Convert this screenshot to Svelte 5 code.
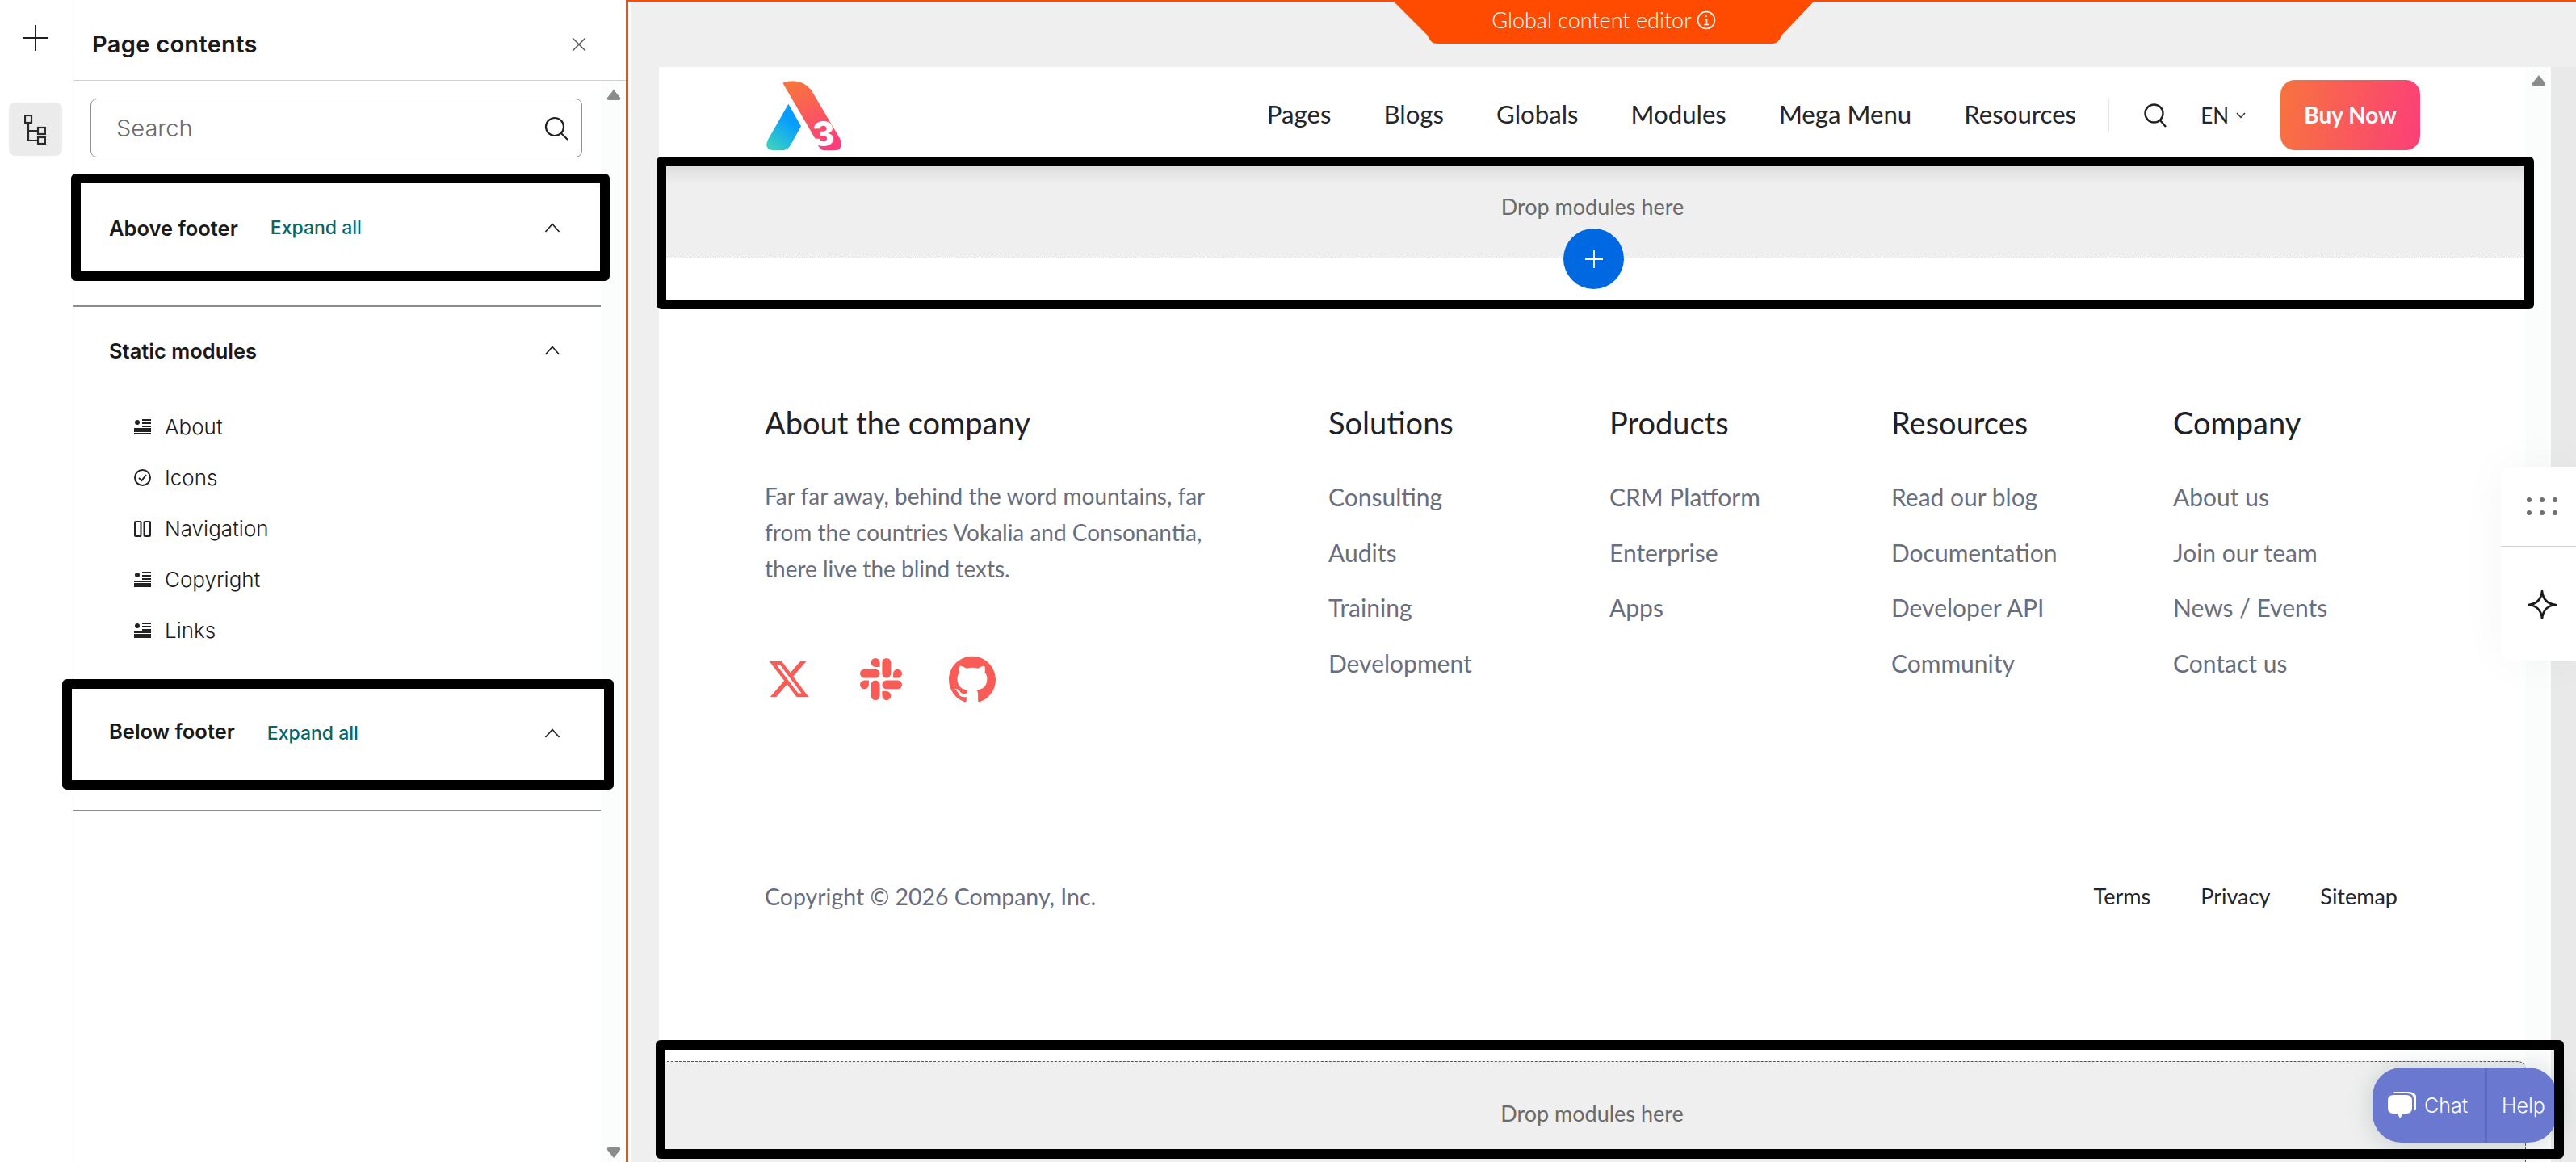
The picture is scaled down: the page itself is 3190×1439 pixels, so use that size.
<script>
  const modules = [
    { name: 'About', icon: 'text' },
    { name: 'Icons', icon: 'check' },
    { name: 'Navigation', icon: 'cols' },
    { name: 'Copyright', icon: 'text' },
    { name: 'Links', icon: 'text' }
  ];
  const nav = ['Pages', 'Blogs', 'Globals', 'Modules', 'Mega Menu', 'Resources'];
  const columns = [
    { title: 'Solutions', links: ['Consulting', 'Audits', 'Training', 'Development'] },
    { title: 'Products', links: ['CRM Platform', 'Enterprise', 'Apps'] },
    { title: 'Resources', links: ['Read our blog', 'Documentation', 'Developer API', 'Community'] },
    { title: 'Company', links: ['About us', 'Join our team', 'News / Events', 'Contact us'] }
  ];
</script>

{#snippet chevron()}
  <svg class="chev" viewBox="0 0 20 12" width="20" height="12"><path d="M1.5 11 10 1.5 18.500 11" fill="none" stroke="#222" stroke-width="1.7"/></svg>
{/snippet}

{#snippet arrow(down)}
  <svg class="arrow" class:down viewBox="0 0 18 14" width="18" height="14"><path d="M9 1 17 11Q18 14 15 14H3Q0 14 1 11Z" fill="#8b8b8b"/></svg>
{/snippet}

<div class="root">
  <aside class="rail">
    <svg class="rail-plus" viewBox="0 0 32 32" width="32" height="32"><path d="M16 0V32M0 16H32" stroke="#1f1f1f" stroke-width="2"/></svg>
    <div class="rail-btn">
      <svg viewBox="0 0 27 37" width="27" height="37" fill="none" stroke="#2b2b2b" stroke-width="2.200">
        <rect x="1" y="1" width="8" height="9"/><rect x="17" y="16" width="9" height="8"/><rect x="17" y="28" width="9" height="8"/>
        <path d="M5 10V32H17M5 20H17"/>
      </svg>
    </div>
  </aside>

  <section class="panel">
    <header class="panel-head">
      <h1>Page contents</h1>
      <svg viewBox="0 0 18 18" width="18" height="18"><path d="M1 1 17 17M17 1 1 17" stroke="#555" stroke-width="1.500"/></svg>
    </header>
    <div class="panel-scroll">
      <div class="panel-body">
        <div class="search">
          <span>Search</span>
          <svg viewBox="0 0 30 30" width="30" height="30" fill="none" stroke="#1f1f1f" stroke-width="2.200"><circle cx="13" cy="13" r="11"/><path d="M21 21 29 29"/></svg>
        </div>
        <div class="sec sec-above">
          <div class="sec-title">Above footer</div>
          <div class="expand">Expand all</div>
          {@render chevron()}
        </div>
        <div class="sec sec-static">
          <div class="sec-title">Static modules</div>
          {@render chevron()}
        </div>
        <ul class="mods">
          {#each modules as m}
            <li>
              {#if m.icon === 'text'}
                <svg viewBox="0 0 21 19" width="21" height="19" fill="#222"><circle cx="4" cy="4" r="3"/><path d="M10 0h11v2H10zM10 4h11v2H10zM10 8h11v2H10zM0 11h21v2H0zM0 14h21v2H0zM0 17h21v2H0z"/></svg>
              {:else if m.icon === 'check'}
                <svg viewBox="0 0 21 21" width="21" height="21" fill="none" stroke="#222" stroke-width="2"><circle cx="10.500" cy="10.500" r="9.500"/><path d="M6 11 9.500 14 15 7"/></svg>
              {:else}
                <svg viewBox="0 0 21 20" width="21" height="20" fill="none" stroke="#222" stroke-width="2"><rect x="1" y="1" width="7.500" height="18" rx="1"/><rect x="12.500" y="1" width="7.500" height="18" rx="1"/></svg>
              {/if}
              <span>{m.name}</span>
            </li>
          {/each}
        </ul>
        <div class="sec sec-below">
          <div class="sec-title">Below footer</div>
          <div class="expand">Expand all</div>
          {@render chevron()}
        </div>
      </div>
      <div class="track">
        {@render arrow(false)}
        {@render arrow(true)}
      </div>
    </div>
  </section>

  <main class="stage">
    <div class="tab">Global content editor
      <svg viewBox="0 0 24 24" width="24" height="24" fill="none" stroke="#fff" stroke-width="1.600"><circle cx="12" cy="12" r="10.500"/><path d="M12 6v2M10 11h2.500v6M9.500 17.500h5.500"/></svg>
    </div>
    <div class="page">
      <div class="page-content">
        <header class="site-head">
          <svg class="logo" viewBox="140 50 291 300" width="97" height="100">
            <defs>
              <linearGradient id="lgBlue" x1="0.750" y1="0.200" x2="0.300" y2="1"><stop offset="0.200" stop-color="#069dff"/><stop offset="1" stop-color="#37cfc3"/></linearGradient>
              <linearGradient id="lgRed" x1="0.300" y1="0" x2="0.700" y2="1"><stop offset="0" stop-color="#f7743e"/><stop offset="1" stop-color="#fd3c7d"/></linearGradient>
            </defs>
            <path d="M228 145 275 228 236 298Q225 318 200 318H172Q135 314 152 278Z" fill="url(#lgBlue)"/>
            <path d="M207 67Q270 45 312 92L420 275Q436 318 395 318H360Q342 318 328 275Z" fill="url(#lgRed)"/>
            <text x="316" y="302" class="logo-3">3</text>
          </svg>
          <nav class="site-nav">
            {#each nav as item}<span>{item}</span>{/each}
          </nav>
          <div class="site-tools">
            <svg viewBox="0 0 28 30" width="28" height="30" fill="none" stroke="#222" stroke-width="2.400"><circle cx="12.500" cy="12.500" r="11"/><path d="M20 21 27 29"/></svg>
            <span class="lang">EN</span>
            <svg viewBox="0 0 12 8" width="12" height="8" fill="none" stroke="#333" stroke-width="1.500"><path d="M1 1 6 6.500 11 1"/></svg>
          </div>
          <div class="buy">Buy Now</div>
        </header>

        <div class="drop drop-top">Drop modules here</div>
        <div class="add-row">
          <div class="add">
            <svg viewBox="0 0 24 24" width="24" height="24"><path d="M12 1V23M1 12H23" stroke="#fff" stroke-width="1.800"/></svg>
          </div>
        </div>

        <footer class="site-foot">
          <div class="foot-grid">
            <div class="about">
              <h3>About the company</h3>
              <p>Far far away, behind the word mountains, far<br/>from the countries Vokalia and Consonantia,<br/>there live the blind texts.</p>
              <div class="social">
                <svg viewBox="0 0 24 24" width="60" height="54"><path d="M18.244 2.250h3.308l-7.227 8.260 8.502 11.240H16.170l-5.214-6.817L4.990 21.750H1.680l7.730-8.835L1.254 2.250H8.080l4.713 6.231zm-1.161 17.520h1.833L7.084 4.126H5.117z"/></svg>
                <svg viewBox="0 0 24 24" width="52" height="52"><path d="M5.042 15.165a2.528 2.528 0 0 1-2.520 2.523A2.528 2.528 0 0 1 0 15.165a2.527 2.527 0 0 1 2.522-2.520h2.520v2.520zM6.313 15.165a2.527 2.527 0 0 1 2.521-2.520 2.527 2.527 0 0 1 2.521 2.520v6.313A2.528 2.528 0 0 1 8.834 24a2.528 2.528 0 0 1-2.521-2.522v-6.313zM8.834 5.042a2.528 2.528 0 0 1-2.521-2.520A2.528 2.528 0 0 1 8.834 0a2.528 2.528 0 0 1 2.521 2.522v2.520H8.834zM8.834 6.313a2.528 2.528 0 0 1 2.521 2.521 2.528 2.528 0 0 1-2.521 2.521H2.522A2.528 2.528 0 0 1 0 8.834a2.528 2.528 0 0 1 2.522-2.521h6.312zM18.956 8.834a2.528 2.528 0 0 1 2.522-2.521A2.528 2.528 0 0 1 24 8.834a2.528 2.528 0 0 1-2.522 2.521h-2.522V8.834zM17.688 8.834a2.528 2.528 0 0 1-2.523 2.521 2.527 2.527 0 0 1-2.520-2.521V2.522A2.527 2.527 0 0 1 15.165 0a2.528 2.528 0 0 1 2.523 2.522v6.312zM15.165 18.956a2.528 2.528 0 0 1 2.523 2.522A2.528 2.528 0 0 1 15.165 24a2.527 2.527 0 0 1-2.520-2.522v-2.522h2.520zM15.165 17.688a2.527 2.527 0 0 1-2.520-2.523 2.526 2.526 0 0 1 2.520-2.520h6.313A2.527 2.527 0 0 1 24 15.165a2.528 2.528 0 0 1-2.522 2.523h-6.313z"/></svg>
                <svg viewBox="0 0 24 24" width="58" height="58"><path d="M12 .297c-6.630 0-12 5.373-12 12 0 5.303 3.438 9.800 8.205 11.385.6.113.82-.258.82-.577 0-.285-.01-1.040-.015-2.040-3.338.724-4.042-1.610-4.042-1.610C4.422 18.070 3.633 17.700 3.633 17.700c-1.087-.744.084-.729.084-.729 1.205.084 1.838 1.236 1.838 1.236 1.070 1.835 2.809 1.305 3.495.998.108-.776.417-1.305.76-1.605-2.665-.3-5.466-1.332-5.466-5.930 0-1.310.465-2.380 1.235-3.220-.135-.303-.54-1.523.105-3.176 0 0 1.005-.322 3.300 1.230.96-.267 1.980-.399 3-.405 1.020.006 2.040.138 3 .405 2.280-1.552 3.285-1.230 3.285-1.230.645 1.653.24 2.873.12 3.176.765.840 1.230 1.910 1.230 3.220 0 4.610-2.805 5.625-5.475 5.920.42.360.81 1.096.81 2.220 0 1.606-.015 2.896-.015 3.286 0 .315.21.69.825.57C20.565 22.092 24 17.592 24 12.297c0-6.627-5.373-12-12-12"/></svg>
              </div>
            </div>
            {#each columns as col}
              <div class="col">
                <h3>{col.title}</h3>
                {#each col.links as l}<div class="col-link">{l}</div>{/each}
              </div>
            {/each}
          </div>
          <div class="foot-bar">
            <span class="copy">Copyright © 2026 Company, Inc.</span>
            <div class="legal"><span>Terms</span><span>Privacy</span><span>Sitemap</span></div>
          </div>
        </footer>

        <div class="drop drop-bottom">Drop modules here</div>
      </div>
      <div class="page-track">{@render arrow(false)}</div>
    </div>
    <div class="gutter"></div>
  </main>

  <!-- annotation frames and floating widgets sit over the page -->
  <div class="frame f1"></div>
  <div class="frame f2"></div>
  <div class="frame f3"></div>

  <div class="float">
    <div class="float-cell">
      <svg viewBox="0 0 38 22" width="38" height="22" fill="#707070">
        {#each [3, 19, 35] as x}<circle cx={x} cy="3" r="3"/><circle cx={x} cy="19" r="3"/>{/each}
      </svg>
    </div>
    <div class="float-cell cell-2">
      <svg viewBox="0 0 36 36" width="36" height="36"><path d="M18 1C19 11 25 17 35 18 25 19 19 25 18 35 17 25 11 19 1 18 11 17 17 11 18 1Z" fill="none" stroke="#1a1a1a" stroke-width="2.600" stroke-linejoin="round"/></svg>
    </div>
  </div>

  <div class="chat">
    <div class="chat-a">
      <svg viewBox="0 0 35 35" width="35" height="35"><path d="M8 1H24Q33 1 35 6V22Q35 24 32 25V10Q32 3 24 3H8Q6 3 8 1Z" fill="#fff"/><path d="M7 5H23Q30 5 30 12V21Q30 28 23 28H19L15 34 12 28H7Q0 28 0 21V12Q0 5 7 5Z" fill="#fff"/></svg>
      <span>Chat</span>
    </div>
    <div class="chat-b">Help</div>
  </div>

  <div class="frame f4"></div>
</div>

<style>
  :global(body) {
    margin: 0;
    background: #fff;
  }

  h1, h3, p, ul {
    margin: 0;
    padding: 0;
  }

  .root {
    position: relative;
    display: flex;
    width: 3190px;
    height: 1439px;
    overflow: hidden;
    font-family: "Lato", "Liberation Sans", sans-serif;
  }

  /* left rail */
  .rail {
    width: 87px;
    flex: none;
    border-right: 1px solid #c9c9c9;
    display: flex;
    flex-direction: column;
    align-items: center;
    padding: 31px 3px 0 0;
    box-sizing: content-box;
  }

  .rail-btn {
    width: 66px;
    height: 66px;
    margin-top: 64px;
    background: #ebebeb;
    border-radius: 8px;
    display: flex;
    align-items: center;
    justify-content: center;
  }

  /* page contents panel */
  .panel {
    width: 684px;
    flex: none;
    display: flex;
    flex-direction: column;
    font-family: "Inter", "Liberation Sans", sans-serif;
    color: #1a1a1a;
  }

  .panel-head {
    height: 100px;
    box-sizing: border-box;
    border-bottom: 1px solid #cfcfcf;
    display: flex;
    align-items: center;
    justify-content: space-between;
    padding: 10px 49px 0 23px;
  }

  .panel-head h1 {
    font-size: 29px;
    font-weight: 600;
    letter-spacing: 0.3px;
  }

  .panel-scroll {
    flex: 1;
    display: flex;
  }

  .panel-body {
    flex: 1;
    padding-top: 22px;
  }

  .track {
    width: 31px;
    background: #fbfcfc;
    display: flex;
    flex-direction: column;
    justify-content: space-between;
    align-items: center;
    padding: 10px 0 4px;
  }

  .arrow.down {
    transform: scaleY(-1);
  }

  .search {
    width: 609px;
    height: 73px;
    margin-left: 21px;
    box-sizing: border-box;
    border: 1px solid #909090;
    border-radius: 8px;
    display: flex;
    align-items: center;
    justify-content: space-between;
    padding: 0 16px 0 31px;
    font-size: 29px;
    font-weight: 300;
    color: #6b6b6b;
  }

  .sec {
    display: flex;
    align-items: center;
    padding: 0 50px 0 44px;
    position: relative;
  }

  .sec-title {
    font-size: 25.500px;
    font-weight: 600;
  }

  .expand {
    font-size: 23px;
    font-weight: 500;
    color: #00696d;
    margin-left: 40px;
  }

  .chev {
    margin-left: auto;
  }

  .sec-above {
    height: 132px;
    margin-top: 21px;
    margin-bottom: 30px;
  }

  .sec-static {
    border-top: 2px solid #8b8b8b;
    height: 108px;
  }

  .sec-below {
    height: 191px;
    border-bottom: 1px solid #8b8b8b;
  }

  .sec-below .sec-title {
    margin-bottom: 4px;
  }

  .mods {
    list-style: none;
    padding: 9px 0 0 75px;
  }

  .mods li {
    height: 63px;
    display: flex;
    align-items: center;
    gap: 17px;
    font-size: 26px;
    font-weight: 300;
  }

  .mods svg {
    flex: none;
  }

  /* stage */
  .stage {
    position: relative;
    flex: 1;
    display: flex;
    border-left: 3px solid #ff4b00;
    border-top: 2px solid #ff4b00;
    background: #efefef;
    padding: 81px 0 0 38px;
    box-shadow: inset 3px 0 0 #fafafa;
  }

  .tab {
    position: absolute;
    left: 948px;
    top: 0;
    width: 520px;
    height: 52px;
    background: #ff4b00;
    clip-path: path('M0 0H520L480 42Q477 52 468 52H54Q45 52 42 42Z');
    color: #fff;
    font-size: 27px;
    display: flex;
    align-items: center;
    justify-content: center;
    gap: 6px;
    padding-bottom: 7px;
    box-sizing: border-box;
    font-weight: 300;
  }

  .page {
    width: 2343px;
    flex: none;
    display: flex;
    background: #fff;
  }

  .page-content {
    width: 2312px;
    flex: none;
    display: flex;
    flex-direction: column;
  }

  .page-track {
    flex: 1;
    background: #fbfcfc;
    padding-top: 9px;
    display: flex;
    justify-content: center;
    align-items: flex-start;
  }

  .gutter {
    flex: 1;
    background: #e9e9e9;
  }

  .site-head {
    height: 119px;
    flex: none;
    display: flex;
    align-items: center;
    padding: 0 131px 0 131px;
    box-sizing: border-box;
    color: #23262b;
  }

  .logo {
    margin-top: 8px;
  }

  .logo-3 {
    font-family: "Inter", sans-serif;
    font-size: 128px;
    font-weight: 800;
    fill: #fff;
  }

  .site-nav {
    margin-left: auto;
    display: flex;
    gap: 65px;
    font-size: 31.200px;
    padding: 0 40px 3px 0;
    border-right: 1px solid #e5e5e5;
  }

  .site-tools {
    display: flex;
    align-items: center;
    margin-left: 43px;
  }

  .lang {
    margin-left: 42px;
    margin-right: 9px;
    font-size: 26px;
  }

  .buy {
    width: 173px;
    height: 87px;
    margin-left: 43px;
    padding-bottom: 2px;
    box-sizing: border-box;
    border-radius: 18px;
    background: linear-gradient(100deg, #f7743e, #fb3f78);
    color: #fff;
    font-size: 28px;
    font-weight: 700;
    display: flex;
    align-items: center;
    justify-content: center;
  }

  .drop {
    flex: none;
    display: flex;
    justify-content: center;
    box-sizing: border-box;
    color: #6a6a6a;
    font-size: 27px;
    font-weight: 400;
  }

  .drop-top {
    height: 118px;
    align-items: center;
    padding-bottom: 10px;
    border-bottom: 1px dashed #555;
    background: linear-gradient(#dfdfdf 5px, #efefef 26px);
  }

  .drop-bottom {
    height: 125px;
    align-items: center;
    padding-top: 3px;
    border-top: 1px dashed #555;
    border-right: 1px dashed #555;
    border-top-right-radius: 10px;
    background: #efefef;
  }

  .add-row {
    position: relative;
    height: 60px;
    flex: none;
  }

  .add {
    position: absolute;
    left: 1120px;
    top: -37px;
    width: 75px;
    height: 75px;
    border-radius: 50%;
    background: #0068e1;
    display: flex;
    align-items: center;
    justify-content: center;
  }

  .site-foot {
    flex: 1;
    padding: 123px 131px 0 131px;
  }

  .foot-grid {
    display: grid;
    grid-template-columns: 698px 348px 349px 349px auto;
    height: 365px;
  }

  .site-foot h3 {
    font-size: 38px;
    font-weight: 400;
    line-height: 40px;
    color: #1e2126;
  }

  .about p {
    margin-top: 49px;
    font-size: 28px;
    line-height: 45px;
    color: #696e7c;
    font-weight: 400;
  }

  .social {
    display: flex;
    align-items: center;
    margin-top: 85px;
    gap: 58px;
    fill: #f95c57;
  }

  .col h3 {
    margin-bottom: 52px;
  }

  .col-link {
    font-size: 30px;
    line-height: 40px;
    margin-bottom: 28.600px;
    color: #696e7c;
  }

  .foot-bar {
    margin-top: 222px;
    display: flex;
    justify-content: space-between;
    line-height: 40px;
    font-size: 27px;
  }

  .copy {
    color: #696e7c;
    font-size: 28.500px;
  }

  .legal {
    display: flex;
    gap: 62px;
    color: #23262b;
    padding-right: 28px;
  }

  /* overlays */
  .frame {
    position: absolute;
    box-sizing: border-box;
    border: 12px solid #000;
    border-radius: 6px;
  }

  .f1 { left: 88px; top: 215px; width: 667px; height: 133px; }
  .f2 { left: 77px; top: 841px; width: 683px; height: 137px; }
  .f3 { left: 813px; top: 194px; width: 2325px; height: 189px; }
  .f4 { left: 812px; top: 1288px; width: 2363px; height: 147px; }

  .float {
    position: absolute;
    left: 3097px;
    top: 578px;
    width: 93px;
    height: 240px;
    background: #fff;
    border-radius: 12px 0 0 12px;
    box-shadow: 0 0 60px rgba(0, 0, 0, 0.04);
    display: flex;
    flex-direction: column;
  }

  .float-cell {
    height: 99px;
    flex: none;
    display: flex;
    align-items: center;
    justify-content: center;
    border-bottom: 1px solid #cfcfcf;
    box-sizing: border-box;
    padding-left: 9px;
  }

  .cell-2 {
    flex: 1;
    border-bottom: 0;
    padding-top: 2px;
  }

  .chat {
    position: absolute;
    left: 2938px;
    top: 1322px;
    width: 229px;
    height: 93px;
    border-radius: 36px;
    background: #6b78d0;
    box-shadow: 0 2px 30px rgba(60, 90, 90, 0.22);
    color: #fff;
    display: flex;
    font-family: "Inter", sans-serif;
    font-weight: 300;
    font-size: 25px;
  }

  .chat-a {
    width: 142px;
    flex: none;
    display: flex;
    align-items: center;
    padding-left: 19px;
    gap: 10px;
    box-sizing: border-box;
    border-right: 3px solid #5c68b8;
  }

  .chat-b {
    padding-left: 18px;
    display: flex;
    align-items: center;
  }
</style>
